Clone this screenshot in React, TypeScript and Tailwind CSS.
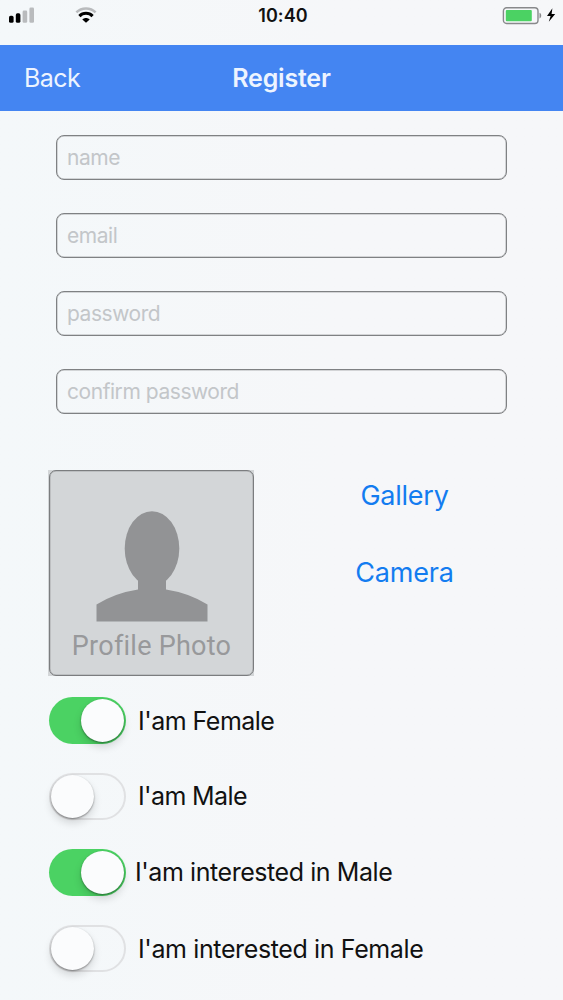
const fields = [
  { placeholder: "name", type: "text" },
  { placeholder: "email", type: "email" },
  { placeholder: "password", type: "password" },
  { placeholder: "confirm password", type: "password" },
];

const options = [
  { label: "I'am Female", on: true, style: "ml-3 tracking-[-0.52px]" },
  { label: "I'am Male", on: false, style: "ml-3 mb-0.5 tracking-[-0.62px]" },
  { label: "I'am interested in Male", on: true, style: "ml-[9px] mb-0.5 tracking-[-0.43px]" },
  { label: "I'am interested in Female", on: false, style: "ml-3 tracking-[-0.38px]" },
];

function StatusBar() {
  return (
    <div className="grid h-[45px] grid-cols-3 items-start">
      <div className="flex items-start pl-2 pt-[7px]">
        <svg width="27" height="16" viewBox="0 0 27 16">
          <rect x="1" y="8.8" width="4.6" height="7" rx="1.6" fill="#000" />
          <rect x="7.8" y="6.3" width="4.6" height="9.5" rx="1.6" fill="#000" />
          <rect x="14.6" y="3.6" width="4.6" height="12.2" rx="1.3" fill="#b9bbbd" />
          <rect x="21.4" y="0.6" width="4.6" height="15.2" rx="1.3" fill="#b9bbbd" />
        </svg>
        <svg className="ml-[40px]" width="22" height="16" viewBox="0 0 22 16" fill="none">
          <path d="M1.4 5.4C6.6 .1 15.4 .1 20.6 5.4" stroke="#b9bbbd" strokeWidth="2.6" />
          <path d="M4.4 9.1C8 5.3 14 5.3 17.6 9.1" stroke="#000" strokeWidth="3" />
          <path d="M7.3 12.4C9.5 10.4 12.5 10.4 14.7 12.4L11 15.8Z" fill="#000" />
        </svg>
      </div>
      <span className="pt-1 pl-[3px] text-center text-[18px] leading-6 font-semibold tracking-[0.1px] text-[#111]">
        10:40
      </span>
      <div className="flex items-start justify-end pt-[7px] pr-[7px]">
        <svg width="54" height="18" viewBox="0 0 54 18">
          <rect x="1.4" y="0.7" width="34.6" height="15.8" rx="3.2" fill="none" stroke="#88898b" strokeWidth="1.4" />
          <rect x="3.8" y="2.9" width="26" height="11.4" rx="1" fill="#4bd263" />
          <path d="M37.5 5.8C39.8 6.5 39.8 10.8 37.5 11.5Z" fill="#88898b" />
          <path d="M50.4 1.2L45 9H48.6L46.8 14.8L53.2 7H49.6Z" fill="#000" />
        </svg>
      </div>
    </div>
  );
}

function ProfilePhoto() {
  return (
    <div className="h-[206px] w-[206px] bg-[#d3d6d8] pl-px">
      <div className="flex h-full flex-col items-center rounded-[7px] border border-[#7b7d7f] pt-10 shadow-[inset_0_0_0_0.5px_#a6a8aa]">
        <svg width="112" height="111" viewBox="0 0 112 111" fill="#929395">
          <ellipse cx="56" cy="37.5" rx="27.3" ry="37.3" />
          <path d="M42 64H70V78.5Q93 82 111.5 93.5V110.5H0.5V93.5Q19 82 42 78.5Z" />
        </svg>
        <span className="mt-[8px] font-[Roboto] text-[27px] leading-8 tracking-[0.25px] whitespace-nowrap text-[#98999b]">
          Profile Photo
        </span>
      </div>
    </div>
  );
}

function Toggle({ on }: { on: boolean }) {
  return (
    <button
      type="button"
      role="switch"
      aria-checked={on}
      className={`flex h-[47px] w-[77px] items-center rounded-full ${
        on ? "justify-end bg-[#4bd263] pr-[2px]" : "border-2 border-[#e0e1e3]"
      }`}
    >
      <span className="size-[43px] rounded-full bg-[#fbfcfd] shadow-[0_1px_2px_rgba(0,0,0,0.4),0_5px_9px_rgba(0,0,0,0.14)]" />
    </button>
  );
}

export default function App() {
  return (
    <div className="h-[1000px] w-full overflow-hidden bg-linear-to-r from-[#f4f8fa] to-[#f6f7f9] to-60% font-[Inter,sans-serif]">
      <StatusBar />

      {/* Navigation */}
      <header className="grid h-[66px] grid-cols-3 items-center bg-[#4485f2] pt-0.5 text-[25px] text-[#edf4ff]">
        <span className="pl-6 tracking-[-0.6px]">Back</span>
        <h1 className="text-center text-[25px] font-semibold tracking-[-0.2px]">Register</h1>
      </header>

      {/* Account fields */}
      <form className="flex flex-col gap-[33px] px-14 pt-6">
        {fields.map((f) => (
          <input
            key={f.placeholder}
            type={f.type}
            placeholder={f.placeholder}
            className="h-[45px] w-[451px] rounded-[8px] border border-[#7f8183] px-[10px] text-[21px] tracking-[-0.45px] shadow-[inset_0_0_0_0.5px_#b0b2b4] placeholder:text-[#c3c6c9]"
          />
        ))}
      </form>

      {/* Photo */}
      <div className="mt-14 flex pl-12">
        <ProfilePhoto />
        <div className="flex flex-1 flex-col items-center gap-[41px] pr-[8px] pt-2 text-[27px] leading-9 text-[#137cf0]">
          <button type="button" className="tracking-[-0.25px]">Gallery</button>
          <button type="button" className="tracking-[-0.2px]">Camera</button>
        </div>
      </div>

      {/* Preferences */}
      <div className="mt-[21px] flex flex-col gap-[29px] pl-[49px]">
        {options.map((o) => (
          <div key={o.label} className="flex items-center">
            <Toggle on={o.on} />
            <span className={`text-[25px] leading-8 text-[#111] ${o.style}`}>{o.label}</span>
          </div>
        ))}
      </div>
    </div>
  );
}
